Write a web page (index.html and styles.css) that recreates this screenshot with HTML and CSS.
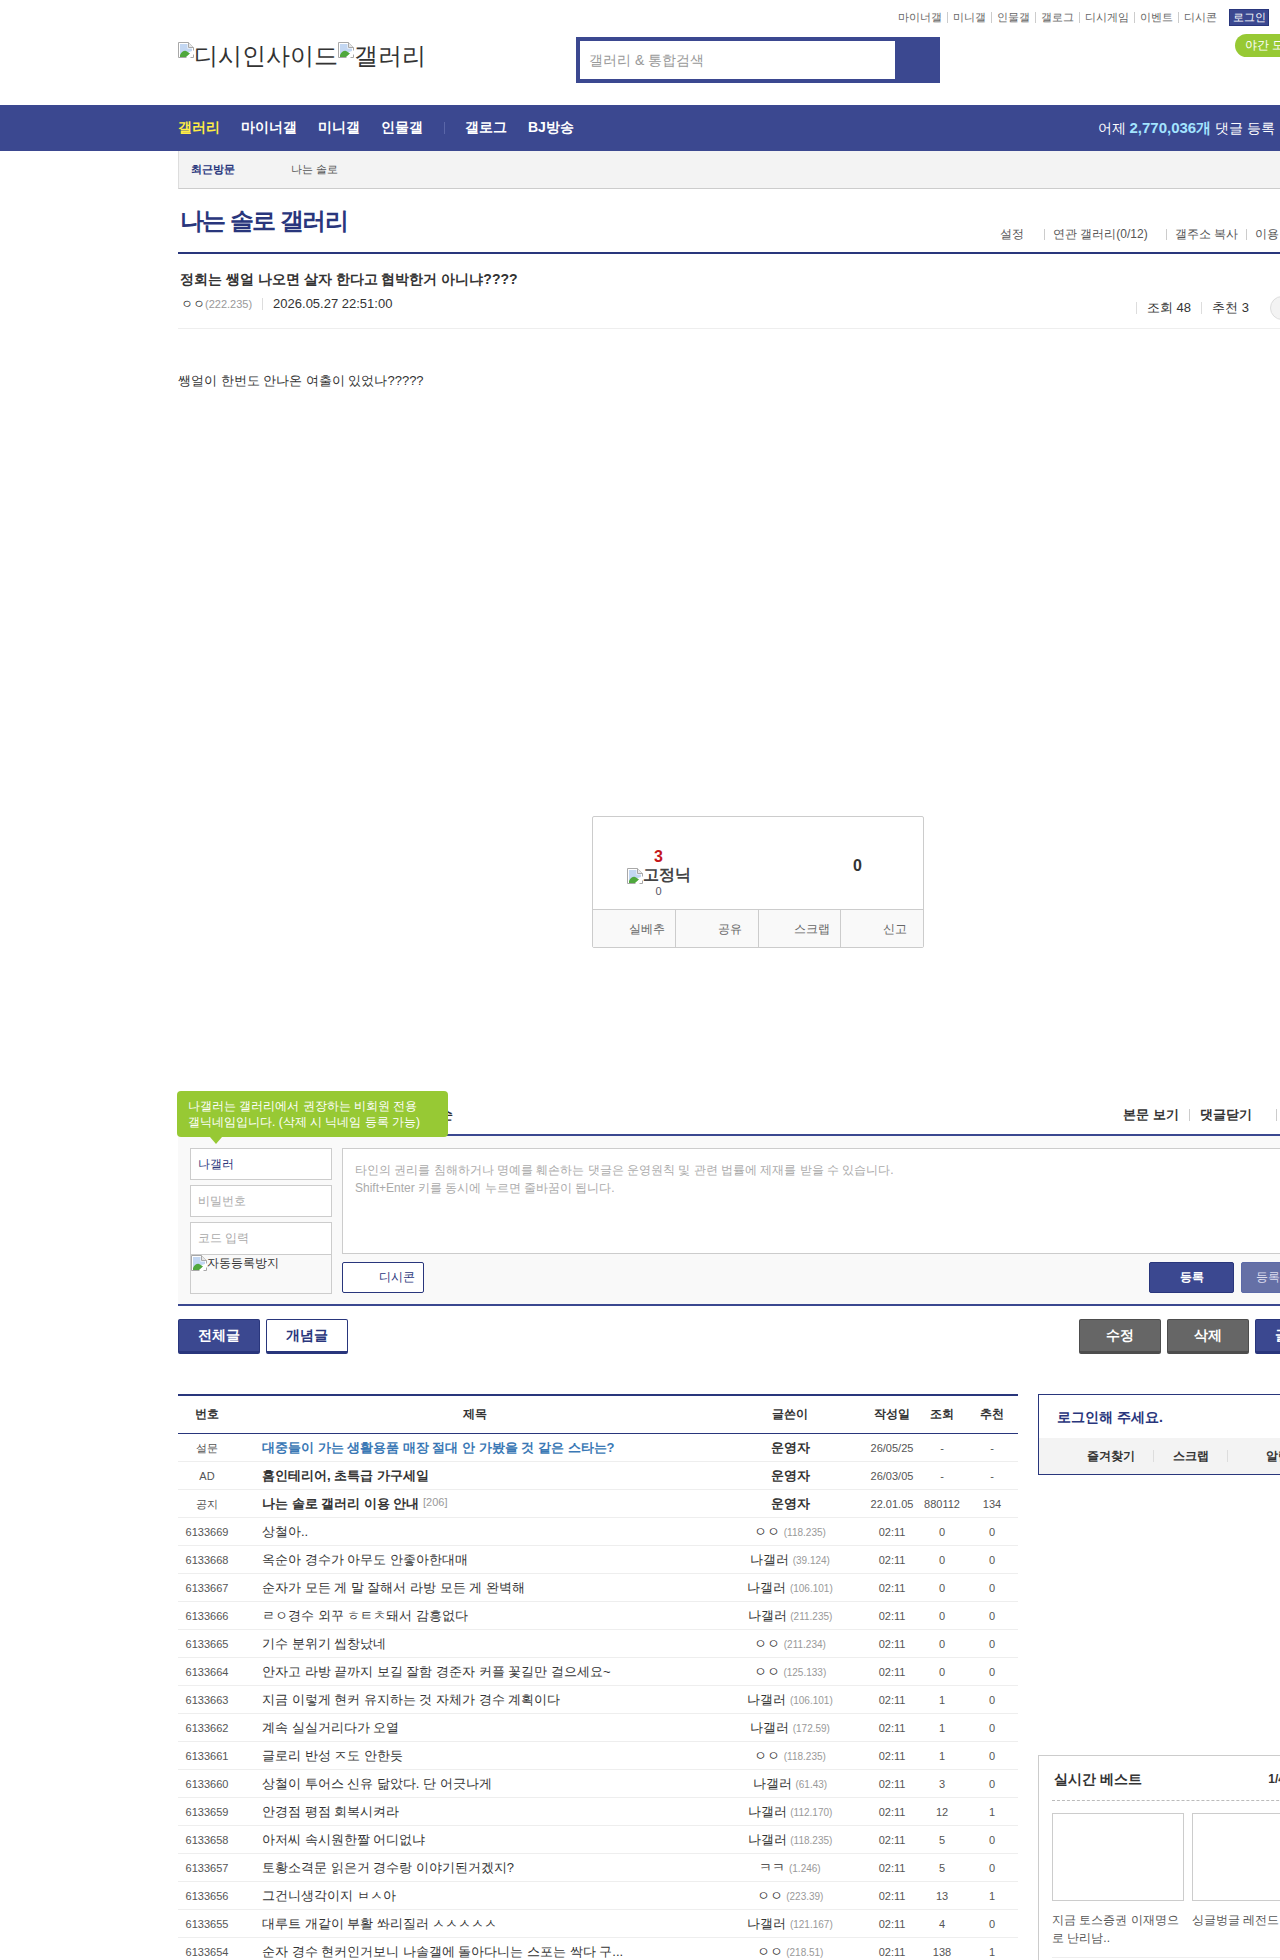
FILE: index.html
```html
<!DOCTYPE html>
<html lang="ko">
<head>
    <meta charset="UTF-8">
    <title>나는 솔로 갤러리</title>
    <link rel="stylesheet" href="styles.css">
</head>
<body>
<svg class="defs" width="0" height="0">
    <symbol id="broken" viewBox="0 0 16 16">
        <path d="M0.5 0.5H10.5L15.5 5.5V15.5H0.5Z" fill="#fff" stroke="#a8a8a8"/>
        <path d="M10.5 0.5V5.5H15.5" fill="#e8e8e8" stroke="#a8a8a8"/>
        <path d="M2 2H9.5V6.5H14V9L2 13Z" fill="#c3d7f2"/>
        <path d="M2 13C4 9 7 8 9 9.5L12 11.5L8 15H2Z" fill="#4fa83d"/>
        <path d="M16 8L8 16H12L16 12Z" fill="#fff"/>
    </symbol>
</svg>

<header class="top">
    <div class="top-links">
        <a>마이너갤</a><a>미니갤</a><a>인물갤</a><a>갤로그</a><a>디시게임</a><a>이벤트</a><a>디시콘</a>
        <button class="login-btn">로그인</button>
    </div>
    <div class="top-main">
        <div class="logo">
            <svg class="broken"><use href="#broken"/></svg>디시인사이드<svg class="broken"><use href="#broken"/></svg>갤러리
        </div>
        <form class="search">
            <input type="text" placeholder="갤러리 &amp; 통합검색">
            <button type="button"></button>
        </form>
        <span class="night">야간 모드</span>
    </div>
</header>

<nav class="gnb">
    <div class="gnb-in">
        <a class="on">갤러리</a><a>마이너갤</a><a>미니갤</a><a>인물갤</a><i></i><a>갤로그</a><a>BJ방송</a>
        <p class="yesterday">어제 <b>2,770,036개</b> 댓글 등록</p>
    </div>
</nav>

<div class="wrap">
    <div class="recent"><b>최근방문</b><span>나는 솔로</span></div>

    <div class="page-head">
        <h1>나는 솔로 갤러리</h1>
        <ul>
            <li>설정</li><li>연관 갤러리(0/12)</li><li>갤주소 복사</li><li>이용 안내</li>
        </ul>
    </div>

    <div class="post-head">
        <h2>정회는 쌩얼 나오면 살자 한다고 협박한거 아니냐????</h2>
        <div class="post-meta">
            <div class="who"><span class="nick">ㅇㅇ</span><span class="ip">(222.235)</span><em>2026.05.27 22:51:00</em></div>
            <div class="count"><span>조회 48</span><span>추천 3</span><span class="circle"></span></div>
        </div>
    </div>

    <p class="post-body">쌩얼이 한번도 안나온 여출이 있었나?????</p>

    <div class="vote">
        <div class="vote-top">
            <div class="vote-cell">
                <strong class="up">3</strong>
                <div class="fix"><svg class="broken"><use href="#broken"/></svg>고정닉</div>
                <small>0</small>
            </div>
            <div class="vote-cell"><strong>0</strong></div>
        </div>
        <div class="vote-btm">
            <span>실베추</span><span>공유</span><span>스크랩</span><span>신고</span>
        </div>
    </div>

    <section class="comment">
        <div class="tip">나갤러는 갤러리에서 권장하는 비회원 전용<br>갤닉네임입니다. (삭제 시 닉네임 등록 가능)</div>
        <div class="cmt-head">
            <b class="cmt-count">전체 댓글 0개 &nbsp;등록순</b>
            <div class="cmt-links"><a>본문 보기</a><a>댓글닫기</a><a>새로고침</a></div>
        </div>
        <div class="cmt-form">
            <div class="cmt-user">
                <div class="field nick-field">나갤러</div>
                <div class="field">비밀번호</div>
                <div class="field code">코드 입력</div>
                <div class="captcha"><svg class="broken"><use href="#broken"/></svg>자동등록방지</div>
            </div>
            <div class="cmt-main">
                <div class="cmt-text">타인의 권리를 침해하거나 명예를 훼손하는 댓글은 운영원칙 및 관련 법률에 제재를 받을 수 있습니다.<br>Shift+Enter 키를 동시에 누르면 줄바꿈이 됩니다.</div>
                <div class="cmt-btns">
                    <button class="dccon">디시콘</button>
                    <button class="reg">등록</button>
                    <button class="reg light">등록+추천</button>
                </div>
            </div>
        </div>
    </section>

    <div class="actions">
        <button class="big blue">전체글</button>
        <button class="big white">개념글</button>
        <button class="big gray push">수정</button>
        <button class="big gray">삭제</button>
        <button class="big blue">글쓰기</button>
    </div>

    <div class="bottom">
        <table class="list">
            <thead>
                <tr><th class="c1">번호</th><th class="c2">제목</th><th class="c3">글쓴이</th><th class="c4">작성일</th><th class="c5">조회</th><th class="c6">추천</th></tr>
            </thead>
            <tbody>
                <tr class="notice"><td>설문</td><td class="sub poll">대중들이 가는 생활용품 매장 절대 안 가봤을 것 같은 스타는?</td><td class="wr">운영자</td><td>26/05/25</td><td>-</td><td>-</td></tr>
                <tr class="notice"><td>AD</td><td class="sub">홈인테리어, 초특급 가구세일</td><td class="wr">운영자</td><td>26/03/05</td><td>-</td><td>-</td></tr>
                <tr class="notice"><td>공지</td><td class="sub">나는 솔로 갤러리 이용 안내 <sup>[206]</sup></td><td class="wr">운영자</td><td>22.01.05</td><td>880112</td><td>134</td></tr>
                <tr><td>6133669</td><td class="sub">상철아..</td><td class="wr">ㅇㅇ <span>(118.235)</span></td><td>02:11</td><td>0</td><td>0</td></tr>
                <tr><td>6133668</td><td class="sub">옥순아 경수가 아무도 안좋아한대매</td><td class="wr">나갤러 <span>(39.124)</span></td><td>02:11</td><td>0</td><td>0</td></tr>
                <tr><td>6133667</td><td class="sub">순자가 모든 게 말 잘해서 라방 모든 게 완벽해</td><td class="wr">나갤러 <span>(106.101)</span></td><td>02:11</td><td>0</td><td>0</td></tr>
                <tr><td>6133666</td><td class="sub">ㄹㅇ경수 외꾸 ㅎㅌㅊ돼서 감흥없다</td><td class="wr">나갤러 <span>(211.235)</span></td><td>02:11</td><td>0</td><td>0</td></tr>
                <tr><td>6133665</td><td class="sub">기수 분위기 씹창났네</td><td class="wr">ㅇㅇ <span>(211.234)</span></td><td>02:11</td><td>0</td><td>0</td></tr>
                <tr><td>6133664</td><td class="sub">안자고 라방 끝까지 보길 잘함 경준자 커플 꽃길만 걸으세요~</td><td class="wr">ㅇㅇ <span>(125.133)</span></td><td>02:11</td><td>0</td><td>0</td></tr>
                <tr><td>6133663</td><td class="sub">지금 이렇게 현커 유지하는 것 자체가 경수 계획이다</td><td class="wr">나갤러 <span>(106.101)</span></td><td>02:11</td><td>1</td><td>0</td></tr>
                <tr><td>6133662</td><td class="sub">계속 실실거리다가 오열</td><td class="wr">나갤러 <span>(172.59)</span></td><td>02:11</td><td>1</td><td>0</td></tr>
                <tr><td>6133661</td><td class="sub">글로리 반성 ㅈ도 안한듯</td><td class="wr">ㅇㅇ <span>(118.235)</span></td><td>02:11</td><td>1</td><td>0</td></tr>
                <tr><td>6133660</td><td class="sub">상철이 투어스 신유 닮았다. 단 어긋나게</td><td class="wr">나갤러 <span>(61.43)</span></td><td>02:11</td><td>3</td><td>0</td></tr>
                <tr><td>6133659</td><td class="sub">안경점 평점 회복시켜라</td><td class="wr">나갤러 <span>(112.170)</span></td><td>02:11</td><td>12</td><td>1</td></tr>
                <tr><td>6133658</td><td class="sub">아저씨 속시원한짤 어디없냐</td><td class="wr">나갤러 <span>(118.235)</span></td><td>02:11</td><td>5</td><td>0</td></tr>
                <tr><td>6133657</td><td class="sub">토황소격문 읽은거 경수랑 이야기된거겠지?</td><td class="wr">ㅋㅋ <span>(1.246)</span></td><td>02:11</td><td>5</td><td>0</td></tr>
                <tr><td>6133656</td><td class="sub">그건니생각이지 ㅂㅅ아</td><td class="wr">ㅇㅇ <span>(223.39)</span></td><td>02:11</td><td>13</td><td>1</td></tr>
                <tr><td>6133655</td><td class="sub">대루트 개같이 부활 쏴리질러 ㅅㅅㅅㅅㅅ</td><td class="wr">나갤러 <span>(121.167)</span></td><td>02:11</td><td>4</td><td>0</td></tr>
                <tr><td>6133654</td><td class="sub">순자 경수 현커인거보니 나솔갤에 돌아다니는 스포는 싹다 구...</td><td class="wr">ㅇㅇ <span>(218.51)</span></td><td>02:11</td><td>138</td><td>1</td></tr>
            </tbody>
        </table>

        <aside class="side">
            <div class="login-box">
                <p>로그인해 주세요.</p>
                <div class="login-links"><a>즐겨찾기</a><a>스크랩</a><a>알림</a></div>
            </div>
            <div class="best">
                <div class="best-head"><b>실시간 베스트</b><span>1/4</span></div>
                <div class="best-items">
                    <div class="best-item"><div class="thumb"></div><p>지금 토스증권 이재명으로 난리남..</p></div>
                    <div class="best-item"><div class="thumb"></div><p>싱글벙글 레전드 환자....</p></div>
                </div>
            </div>
        </aside>
    </div>
</div>
</body>
</html>
```

FILE: styles.css
```css
* {
    box-sizing: border-box;
    margin: 0;
    padding: 0;
}

html, body {
    width: 1280px;
    height: 1960px;
    overflow: hidden;
}

body {
    background-color: #fff;
    font-family: "Liberation Sans", sans-serif;
    font-size: 12px;
    color: #333;
}

button {
    font-family: inherit;
    cursor: pointer;
}

.defs {
    position: absolute;
}

.broken {
    width: 16px;
    height: 16px;
    vertical-align: top;
}

/* header */
.top {
    height: 105px;
    width: 1160px;
    margin-left: 178px;
    padding-top: 9px;
}

.top-links {
    display: flex;
    align-items: center;
    justify-content: flex-end;
    height: 17px;
    padding-right: 69px;
    font-size: 11px;
    color: #666;
}

.top-links a + a {
    margin-left: 5px;
    padding-left: 5px;
    border-left: 1px solid #ccc;
    line-height: 11px;
}

.login-btn {
    width: 40px;
    height: 17px;
    margin-left: 12px;
    border: 1px solid #29367c;
    background-color: #3b4890;
    color: #fff;
    font-size: 11px;
}

.top-main {
    display: flex;
    margin-top: 11px;
}

.logo {
    width: 398px;
    padding-top: 5px;
    font-size: 24px;
    line-height: 28px;
    color: #333;
    white-space: nowrap;
}

.search {
    display: flex;
    width: 364px;
    height: 46px;
    border: 4px solid #3b4890;
    background-color: #3b4890;
}

.search input {
    width: 315px;
    border: 0;
    padding-left: 9px;
    font-family: inherit;
    font-size: 14px;
}

.search input::placeholder {
    color: #999;
    opacity: 1;
}

.search button {
    flex: 1;
    border: 0;
    background-color: #3b4890;
}

.night {
    height: 23px;
    margin-left: 295px;
    margin-top: -3px;
    padding: 0 14px 0 10px;
    border-radius: 12px;
    background-color: #97c934;
    color: #fff;
    font-size: 12px;
    line-height: 23px;
    white-space: nowrap;
}

/* nav */
.gnb {
    height: 46px;
    background-color: #3b4890;
}

.gnb-in {
    display: flex;
    align-items: center;
    width: 1102px;
    height: 46px;
    margin-left: 178px;
    font-size: 14px;
    font-weight: bold;
    color: #fff;
}

.gnb-in a {
    margin-right: 21px;
}

.gnb-in .on {
    color: #ffed44;
}

.gnb-in i {
    width: 1px;
    height: 12px;
    margin: 0 20px 0 0;
    background-color: #5a66a8;
}

.yesterday {
    margin-left: auto;
    margin-right: 5px;
    font-weight: normal;
    font-size: 14px;
    white-space: nowrap;
}

.yesterday b {
    font-size: 15px;
    color: #a3e4ff;
}

/* content */
.wrap {
    width: 1160px;
    margin-left: 178px;
}

.recent {
    display: flex;
    align-items: center;
    height: 38px;
    padding-left: 12px;
    border-left: 1px solid #ddd;
    border-bottom: 1px solid #ccc;
    background-color: #f3f3f3;
    font-size: 11px;
    color: #555;
}

.recent b {
    width: 100px;
    color: #29367c;
}

.page-head {
    display: flex;
    height: 65px;
    border-bottom: 2px solid #29367c;
}

.page-head h1 {
    width: 822px;
    padding: 14px 0 0 2px;
    font-size: 24px;
    line-height: 36px;
    font-weight: bold;
    color: #29367c;
    letter-spacing: -1.6px;
}

.page-head ul {
    display: flex;
    list-style: none;
    padding-top: 36px;
    font-size: 12px;
    color: #555;
    white-space: nowrap;
}

.page-head li + li {
    height: 11px;
    line-height: 11px;
    margin: 4px 0 0 20px;
    padding-left: 8px;
    border-left: 1px solid #ccc;
}

.page-head li:nth-child(3) {
    margin-left: 18px;
}

.page-head li:nth-child(4) {
    margin-left: 8px;
}

.page-head li:first-child {
    line-height: 19px;
}

.post-head {
    height: 75px;
    padding: 15px 0 0 2px;
    border-bottom: 1px solid #eee;
}

.post-head h2 {
    font-size: 14px;
    line-height: 20px;
    color: #333;
}

.post-meta {
    display: flex;
    justify-content: space-between;
    margin: 8px 0 0 -2px;
}

.who {
    display: flex;
    align-items: center;
    height: 14px;
    padding-left: 3px;
    font-size: 12px;
}

.who .ip {
    font-size: 11px;
    color: #999;
}

.who em {
    margin-left: 10px;
    padding-left: 10px;
    border-left: 1px solid #ddd;
    line-height: 12px;
    font-size: 13px;
    font-style: normal;
    color: #333;
}

.count {
    display: flex;
    align-items: center;
    width: 202px;
    height: 22px;
    font-size: 13px;
    color: #333;
}

.count span {
    padding: 0 10px;
    border-left: 1px solid #ddd;
    line-height: 12px;
    white-space: nowrap;
}

.count span.circle {
    flex: none;
    width: 24px;
    height: 24px;
    margin-left: 11px;
    padding: 0;
    border: 1px solid #ddd;
    border-radius: 50%;
    background-color: #f3f3f3;
}

.post-body {
    margin-top: 43px;
    font-size: 13px;
    line-height: 18px;
    color: #333;
}

.vote {
    width: 332px;
    height: 132px;
    margin: 426px 0 0 414px;
    border: 1px solid #ccc;
    border-radius: 2px;
}

.vote-top {
    display: flex;
    height: 93px;
    border-bottom: 1px solid #ccc;
}

.vote-cell {
    display: flex;
    flex: none;
    flex-direction: column;
    align-items: center;
    justify-content: center;
    width: 131px;
    padding-top: 6px;
    font-weight: bold;
}

.vote-cell:first-child {
    margin-right: 68px;
    padding-top: 20px;
}

.vote-cell strong {
    line-height: 18px;
    font-size: 16px;
}

.vote-cell .up {
    color: #c4161c;
}

.fix {
    font-size: 16px;
    line-height: 18px;
    color: #444;
    white-space: nowrap;
}

.fix .broken {
    margin-top: 2px;
}

.vote-cell small {
    font-size: 11px;
    font-weight: normal;
    line-height: 15px;
    color: #556;
}

.vote-btm {
    display: flex;
    height: 37px;
    background-color: #f9f9f9;
}

.vote-btm span {
    flex: 1;
    padding-left: 26px;
    text-align: center;
    line-height: 39px;
    font-size: 12px;
    color: #666;
}

.vote-btm span + span {
    border-left: 1px solid #ccc;
}

/* comments */
.comment {
    position: relative;
    margin-top: 144px;
}

.tip {
    position: absolute;
    left: -1px;
    top: -1px;
    width: 271px;
    height: 46px;
    padding: 7px 11px;
    border-radius: 4px;
    background-color: #97c934;
    color: #fff;
    font-size: 12px;
    line-height: 16px;
    white-space: nowrap;
    z-index: 1;
}

.tip::after {
    content: "";
    position: absolute;
    left: 33px;
    bottom: -7px;
    border-left: 6px solid transparent;
    border-right: 6px solid transparent;
    border-top: 7px solid #97c934;
}

.cmt-head {
    display: flex;
    justify-content: space-between;
    height: 44px;
    border-bottom: 2px solid #3b4890;
    font-size: 13px;
    line-height: 46px;
    color: #333;
}

.cmt-count {
    width: 275px;
    text-align: right;
    white-space: nowrap;
    overflow: hidden;
}

.cmt-links {
    display: flex;
    width: 215px;
    font-weight: bold;
    white-space: nowrap;
}

.cmt-links a + a {
    height: 12px;
    line-height: 12px;
    margin: 17px 0 0 10px;
    padding-left: 10px;
    border-left: 1px solid #ccc;
}

.cmt-links a:last-child {
    margin-left: 24px;
}

.cmt-form {
    display: flex;
    height: 170px;
    padding: 12px 0 0 12px;
    border-bottom: 2px solid #3b4890;
    background-color: #f9f9f9;
}

.cmt-user {
    display: flex;
    flex-direction: column;
    width: 142px;
    margin-right: 10px;
}

.field {
    height: 32px;
    margin-bottom: 5px;
    padding-left: 7px;
    border: 1px solid #ccc;
    background-color: #fff;
    line-height: 30px;
    font-size: 12px;
    color: #aaa;
}

.nick-field {
    color: #29367c;
}

.field.code {
    margin-bottom: 0;
    border-bottom: 0;
}

.captcha {
    height: 40px;
    border: 1px solid #ccc;
    font-size: 12px;
    line-height: 16px;
    color: #333;
    white-space: nowrap;
}

.cmt-main {
    width: 996px;
}

.cmt-text {
    height: 106px;
    padding: 12px 12px;
    border: 1px solid #ccc;
    background-color: #fff;
    font-size: 12px;
    line-height: 18px;
    color: #aaa;
}

.cmt-btns {
    display: flex;
    margin-top: 8px;
    height: 31px;
}

.cmt-btns button {
    flex: none;
    height: 31px;
    border-radius: 2px;
    font-size: 12px;
    font-weight: bold;
}

.dccon {
    width: 82px;
    margin-right: 725px;
    padding-left: 27px;
    border: 1px solid #29367c;
    background-color: #fff;
    color: #29367c;
    font-weight: normal !important;
}

.reg {
    width: 85px;
    border: 1px solid #29367c;
    background-color: #3b4890;
    color: #fff;
}

.reg.light {
    margin-left: 7px;
    border-color: #5c6aa8;
    background-color: #6570a6;
    color: #dde;
    font-weight: normal !important;
    white-space: nowrap;
}

.actions {
    display: flex;
    gap: 6px;
    margin-top: 13px;
}

.big {
    flex: none;
    width: 82px;
    height: 35px;
    border-radius: 2px;
    font-size: 14px;
    font-weight: bold;
}

.big.blue {
    border: 1px solid #29367c;
    border-bottom-width: 3px;
    background-color: #3b4890;
    color: #fff;
}

.big.white {
    border: 1px solid #29367c;
    border-bottom-width: 3px;
    background-color: #fff;
    color: #29367c;
}

.big.gray {
    border: 1px solid #4d4d4d;
    border-bottom-width: 3px;
    background-color: #666;
    color: #fff;
}

.push {
    margin-left: 725px;
}

/* bottom list + side */
.bottom {
    display: flex;
    margin-top: 40px;
}

.list {
    width: 840px;
    flex: none;
    border-collapse: collapse;
    table-layout: fixed;
    border-top: 2px solid #29367c;
    font-size: 11px;
    color: #555;
    align-self: flex-start;
}

.c1 { width: 58px; }
.c2 { width: 478px; }
.c3 { width: 152px; }
.c4 { width: 52px; }
.c5 { width: 48px; }
.c6 { width: 52px; }

.list th {
    height: 38px;
    border-bottom: 1px solid #29367c;
    font-size: 12px;
    color: #333;
}

.list td {
    height: 28px;
    padding-top: 2px;
    border-bottom: 1px solid #eee;
    text-align: center;
    white-space: nowrap;
    overflow: hidden;
}

.list .sub {
    padding-left: 26px;
    text-align: left;
    font-size: 13px;
    color: #333;
}

.list .wr {
    font-size: 13px;
    color: #333;
}

.list .wr span {
    font-size: 10px;
    color: #999;
}

.notice .sub, .notice .wr {
    font-weight: bold;
}

.list .sub.poll {
    color: #3a78b5;
}

.list sup {
    font-size: 11px;
    font-weight: normal;
    vertical-align: 2px;
    color: #999;
}

.side {
    width: 300px;
    margin-left: 20px;
    flex: none;
}

.login-box {
    height: 81px;
    border: 1px solid #29367c;
}

.login-box p {
    height: 43px;
    padding-left: 18px;
    font-size: 14px;
    font-weight: bold;
    line-height: 44px;
    color: #29367c;
}

.login-links {
    display: flex;
    height: 36px;
    padding-left: 48px;
    background-color: #f3f3f3;
    font-size: 12px;
    font-weight: bold;
    line-height: 36px;
    color: #333;
}

.login-links a + a {
    height: 12px;
    line-height: 12px;
    margin: 12px 0 0 18px;
    padding-left: 19px;
    border-left: 1px solid #ddd;
}

.login-links a:last-child {
    padding-left: 38px;
}

.best {
    height: 300px;
    margin-top: 280px;
    padding: 0 13px;
    border: 1px solid #ccc;
}

.best-head {
    display: flex;
    justify-content: space-between;
    height: 45px;
    padding: 0 2px;
    border-bottom: 1px dashed #bbb;
    line-height: 46px;
}

.best-head b {
    font-size: 14px;
    color: #333;
}

.best-head span {
    margin-right: 37px;
    font-weight: bold;
    color: #333;
}

.best-items {
    display: flex;
    gap: 8px;
    padding: 12px 0 10px;
    border-bottom: 1px solid #eee;
}

.best-item {
    width: 132px;
}

.thumb {
    height: 88px;
    border: 1px solid #ccc;
}

.best-item p {
    margin-top: 10px;
    font-size: 12px;
    line-height: 18px;
    color: #555;
}
```
